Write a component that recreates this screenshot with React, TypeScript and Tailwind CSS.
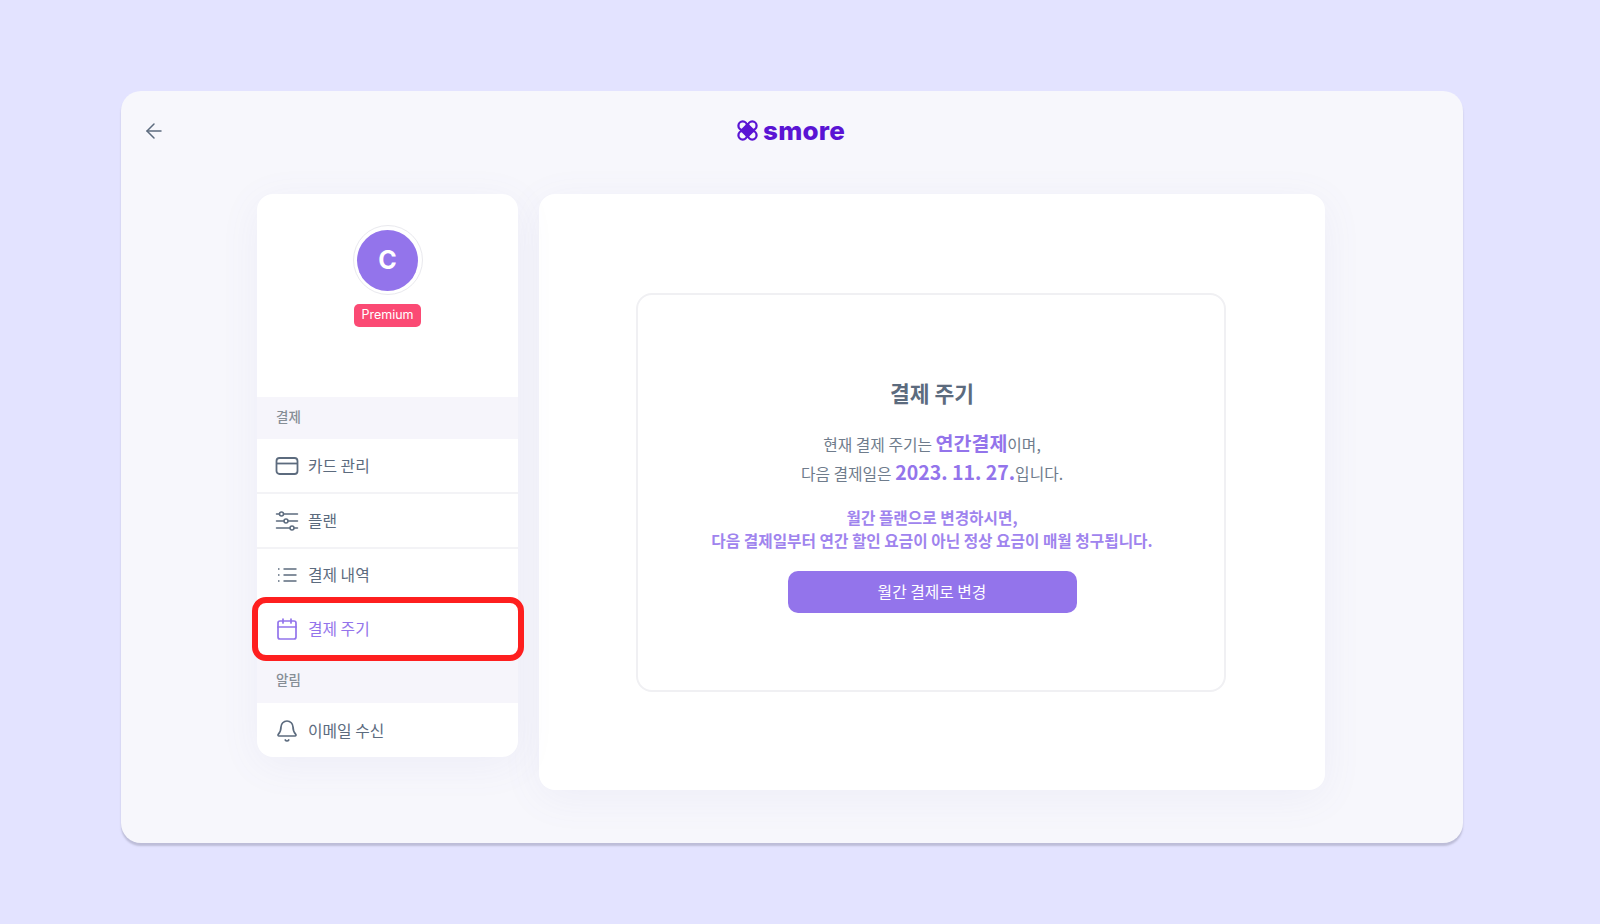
import { ArrowLeft, Bell, Calendar } from 'lucide-react';

const font = { fontFamily: '"Noto Sans CJK KR", "Noto Sans", sans-serif' };

const CardIcon = (props: { className?: string; strokeWidth?: number }) => (
  <svg viewBox="0 0 24 24" fill="none" stroke="currentColor" strokeWidth={1.8} className={props.className}>
    <rect x="1.5" y="4" width="21" height="16" rx="3" />
    <path d="M1.5 9.5H22.5" />
  </svg>
);

const PlanIcon = (props: { className?: string; strokeWidth?: number }) => (
  <svg viewBox="0 0 24 24" fill="none" stroke="currentColor" strokeWidth={1.5} strokeLinecap="round" className={props.className}>
    <path d="M1.5 5H4.5M8.5 5H22.5M1.5 12H9M13 12H22.5M1.5 19H15M19 19H22.5" />
    <circle cx="6.5" cy="5" r="2" />
    <circle cx="11" cy="12" r="2" />
    <circle cx="17" cy="19" r="2" />
  </svg>
);

const ListIcon = (props: { className?: string; strokeWidth?: number }) => (
  <svg viewBox="0 0 24 24" fill="none" stroke="currentColor" strokeWidth={1.5} className={props.className}>
    <path d="M8.5 6H21.5M8.5 12H21.5M8.5 18H21.5" />
    <path d="M3 6H4.5M3 12H4.5M3 18H4.5" />
  </svg>
);

const SectionHeader = ({ label, height }: { label: string; height: string }) => (
  <div className={`flex items-center bg-[#f6f5fb] pl-[19px] text-[13.5px] font-medium text-[#868e96] ${height}`}>{label}</div>
);

const Row = ({ icon: Icon, label, active, border, height }: { icon: any; label: string; active?: boolean; border?: boolean; height: string }) => (
  <div className={`flex items-center pl-[18px] text-[15.8px] ${height} ${border ? 'border-b-2 border-[#f3f3f6]' : ''} ${active ? 'text-[#9374eb]' : 'text-[#5c6b7e]'}`}>
    <Icon className="h-[24px] w-[24px]" strokeWidth={1.7} />
    <span className="ml-[9px]">{label}</span>
  </div>
);

export default function App() {
  return (
    <div style={font} className="h-[924px] w-[1600px] overflow-hidden bg-[#e3e3ff] pl-[121px] pt-[91px]">
      <div className="h-[752px] w-[1342px] rounded-[20px] bg-[#f7f7fc] shadow-[0_3px_2px_#bdbdd8]">
        <header className="relative flex h-[103px] items-start justify-center pr-[2px] pt-[29px]">
          <ArrowLeft className="absolute left-[21px] top-[28px] h-[24px] w-[24px] text-[#5c6b7e]" strokeWidth={1.5} />
          <div className="flex items-center gap-[5px] text-[#5a14d4]">
            <svg width="21" height="21" viewBox="0 0 22 22" fill="none" stroke="currentColor">
              <circle cx="6" cy="6" r="4.5" strokeWidth="2.4" />
              <circle cx="16" cy="6" r="4.5" strokeWidth="2.4" />
              <circle cx="6" cy="16" r="4.5" strokeWidth="2.4" />
              <circle cx="16" cy="16" r="4.5" strokeWidth="2.4" />
              <path d="M11 3.5L18.5 11L11 18.5L3.5 11Z" fill="currentColor" strokeWidth="1" strokeLinejoin="round" />
            </svg>
            <span style={{ fontFamily: '"Inter", sans-serif' }} className="text-[26px] font-extrabold leading-[20px] tracking-[0.2px]">smore</span>
          </div>
        </header>
        <div className="flex items-start gap-[21px] pl-[136px]">
          <aside className="relative h-[563px] w-[261px] rounded-[16px] bg-white shadow-[0_8px_40px_rgba(120,120,190,0.07)]">
            <div className="flex h-[203px] flex-col items-center pt-[31px]">
              <div className="flex h-[70px] w-[70px] items-center justify-center rounded-full border border-[#e9e9ee] bg-white">
                <div style={{ fontFamily: '"Inter", sans-serif' }} className="flex h-[61px] w-[61px] items-center justify-center rounded-full bg-[#9374eb] pt-[2px] text-[25px] font-bold text-white">C</div>
              </div>
              <div style={{ fontFamily: '"Inter", sans-serif' }} className="mt-[9px] flex h-[23px] w-[67px] items-center justify-center rounded-[5px] bg-[#fb4a74] text-[12.5px] text-white">Premium</div>
            </div>
            <SectionHeader label="결제" height="h-[42px] pb-[4px]" />
            <Row icon={CardIcon} label="카드 관리" border height="h-[55px]" />
            <Row icon={PlanIcon} label="플랜" border height="h-[55px]" />
            <Row icon={ListIcon} label="결제 내역" height="h-[52px]" />
            <Row icon={Calendar} label="결제 주기" active height="h-[56px]" />
            <SectionHeader label="알림" height="h-[46px] pb-[1px]" />
            <Row icon={Bell} label="이메일 수신" height="h-[55px]" />
            <div className="absolute left-[-5px] top-[403px] h-[64px] w-[272px] rounded-[14px] border-[6px] border-[#fe1f1f]" />
          </aside>
          <main className="h-[596px] w-[786px] rounded-[16px] bg-white pl-[97px] pt-[99px] shadow-[0_8px_40px_rgba(120,120,190,0.07)]">
            <section className="flex h-[399px] w-[590px] flex-col items-center rounded-[16px] border-2 border-[#f0f0f3] pl-[2px] pt-[83px] text-center">
              <h1 className="text-[21.5px] font-bold leading-[30px] text-[#5c6b7e]">결제 주기</h1>
              <p className="mt-[21px] text-[15.8px] leading-[27px] text-[#6f7c8c]">
                현재 결제 주기는 <b className="text-[19.5px] font-bold leading-[27px] text-[#9374eb]">연간결제</b>이며,
                <br />
                다음 결제일은 <b className="text-[19.5px] font-bold leading-[27px] text-[#9374eb]">2023. 11. 27.</b>입니다.
              </p>
              <p className="mt-[19px] text-[15.7px] font-bold leading-[23px] text-[#9f84ee]">
                월간 플랜으로 변경하시면,
                <br />
                다음 결제일부터 연간 할인 요금이 아닌 정상 요금이 매월 청구됩니다.
              </p>
              <button className="mt-[19px] h-[42px] w-[289px] rounded-[10px] bg-[#9374eb] text-[15.8px] text-white">월간 결제로 변경</button>
            </section>
          </main>
        </div>
      </div>
    </div>
  );
}
